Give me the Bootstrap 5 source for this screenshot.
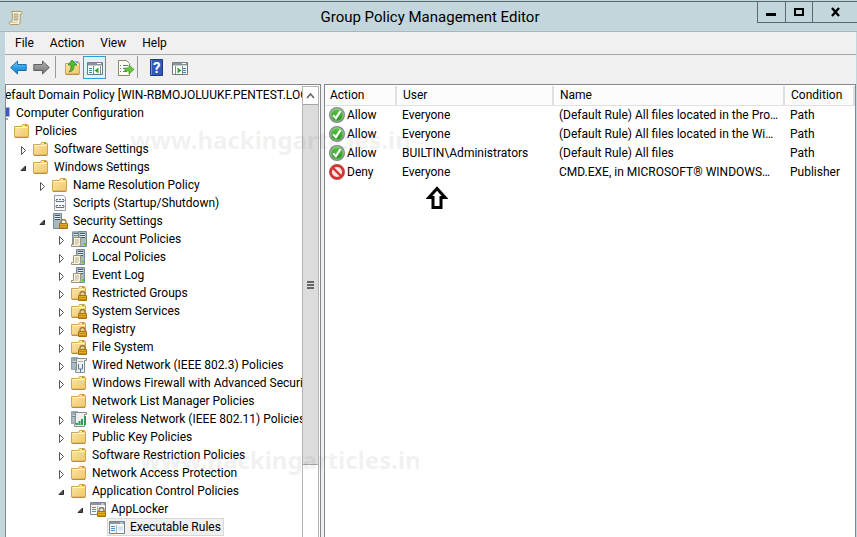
<!DOCTYPE html>
<html lang="en">
<head>
<meta charset="utf-8">
<meta name="viewport" content="width=device-width, initial-scale=1">
<title>Group Policy Management Editor</title>
<link rel="stylesheet" href="https://cdn.jsdelivr.net/npm/bootstrap@5.3.0/dist/css/bootstrap.min.css">
<style>
body{font-family:Roboto,"Open Sans",sans-serif;font-size:12px;line-height:18px;color:#000;background:#c3d6dc}
svg{display:block;flex:none}
button{color:#000}
.gp-window{border-top:1px solid #5b676b;margin-top:1px;height:calc(100vh - 1px)}
.gp-title{height:30px;border-bottom:1px solid #a9b6c0}
.gp-title h1{font-size:15px;line-height:30px;font-weight:400;padding-left:80px}
.gp-caption{height:21px;border:1px solid #5b6770;border-width:0 0 1px 1px;background:none;padding:0}
.gp-caption-s{width:28px}
.gp-caption-m{width:27px}
.gp-caption-l{width:45px}
.gp-main{background:#f0f0f0;margin:0 1px 0 5px}
.gp-menu{height:23px;border-bottom:1px solid #a8a8a8;padding-left:10px;gap:16px}
.gp-menu button{border:0;background:none;padding:0;line-height:20px}
.gp-tools{height:29px;padding:1px 4px 4px}
.gp-tool{width:23px;height:23px;padding:0;border:1px solid transparent;background:none}
.gp-tool.on{border-color:#26a0da;background:#e3f2fa}
.gp-rule{width:1px;height:22px;background:#999}
.gp-panes{gap:3px}
.gp-pane{background:#fff;border:1px solid #828790;border-bottom:0}
.gp-left{width:316px}
.gp-view{padding-top:1px;white-space:nowrap}
.gp-tree{margin-left:-43px}
.gp-tree ul{padding-left:19px}
.gp-node{height:18px}
.gp-twist{width:13px;height:18px;padding:3px 0 0;border:0;background:none;flex:none}
.gp-item{gap:5px;height:18px}
.gp-item.chosen{background:#f0f0f0;outline:1px solid #d9d9d9;outline-offset:-1px;margin-left:-2px;padding:0 3px 0 2px}
.gp-scroll{width:17px;margin:1px 1px 0 0;border:1px solid #b4b4b4;border-bottom:0}
.gp-scroll button{height:17px;padding:0;border:0;background:#fff}
.gp-thumb{height:361px;background:#dcdcdc;border:1px solid #a5a5a5;border-width:1px 0}
.gp-list{table-layout:fixed;width:100%;margin:1px 0 0}
.gp-list th{height:19px;padding:1px 5px 0;line-height:17px;font-weight:400;background:#fcfcfc;border-right:2px solid #e0e0e0;border-bottom:1px solid #e0e0e0}
.gp-list td{height:19px;padding:0 5px;white-space:nowrap;overflow:hidden;text-overflow:ellipsis}
.gp-list td:first-child{padding-left:4px}
.gp-list td svg{margin-right:2px}
.gp-list th+th,.gp-list td+td{padding-left:6px}
.gp-col-action{width:71px}.gp-col-user{width:157px}.gp-col-cond{width:70px}
.gp-pointer{margin:5px 0 0 101px}
.gp-stamp{font:bold 24px/30px "Noto Sans","Open Sans",sans-serif;color:rgba(110,110,110,.11);pointer-events:none;white-space:nowrap}
.gp-stamp-a{left:130px;top:125px}
.gp-stamp-b{left:140px;top:445px}
</style>
<script src="https://cdn.jsdelivr.net/npm/bootstrap@5.3.0/dist/js/bootstrap.bundle.min.js"></script>
</head>
<body class="overflow-hidden">
<svg width="0" height="0" class="position-absolute" aria-hidden="true">
<defs>
<linearGradient id="gold" x2="1" y2="1"><stop stop-color="#fbe6a6"/><stop offset="1" stop-color="#efc76b"/></linearGradient>
<linearGradient id="azure" x2="0" y2="1"><stop stop-color="#7fd0f8"/><stop offset=".5" stop-color="#2ba0e8"/><stop offset="1" stop-color="#1779c4"/></linearGradient>
<linearGradient id="steel" x2="0" y2="1"><stop stop-color="#b5b5b5"/><stop offset="1" stop-color="#6f6f6f"/></linearGradient>
<linearGradient id="leaf" x2="0" y2="1"><stop stop-color="#67c94f"/><stop offset="1" stop-color="#189012"/></linearGradient>
<symbol id="folder" viewBox="0 0 16 16"><path d="M.5 3.500h7l1-2h5l1 1.500v11h-14z" fill="url(#gold)" stroke="#d0a653"/><path d="M1 14.500h13" stroke="#b88f42"/><path d="M9 2.500h3M1.500 4.500h12" stroke="#fff5cf"/><path d="M11 2.500h2" stroke="#4a9be0"/></symbol>
<symbol id="lock" viewBox="0 0 9 10"><path d="M2 5V3a2.500 2.500 0 0 1 5 0v2" fill="none" stroke="#8d7745" stroke-width="1.300"/><path d="M.5 4.500h8v5h-8z" fill="#e2ad2c" stroke="#a87412"/><path d="M1 6.500h7M1 8.500h7" stroke="#c38a16"/></symbol>
<symbol id="folderlock" viewBox="0 0 16 16"><use href="#folder" width="16" height="16"/><use href="#lock" x="7" y="6" width="9" height="10"/></symbol>
<symbol id="tower" viewBox="0 0 9 16"><path d="M.5.5h8v15h-8z" fill="#a9b9c2" stroke="#778994"/><path d="M2 2.500h5M2 4.500h5M2 6.500h5" stroke="#3d5968"/><path d="M2 3.500h5M2 5.500h5" stroke="#e9f0f2"/><path d="M6 13h2" stroke="#52d622" stroke-width="2"/></symbol>
<symbol id="paper" viewBox="0 0 10 10"><path d="M2.500.5h7v7l-1 2h-8v-2h2z" fill="#f8f3dc" stroke="#9b937a"/><path d="M4 3h4M4 5h4M4 7h3" stroke="#bcb294"/></symbol>
<symbol id="server" viewBox="0 0 16 16"><use href="#tower" x="5" width="9" height="16"/><use href="#paper" y="6" width="10" height="10"/></symbol>
<symbol id="servers" viewBox="0 0 16 16"><use href="#tower" x="1" width="8" height="15"/><use href="#tower" x="7" width="9" height="16"/><use href="#paper" y="6" width="10" height="10"/></symbol>
<symbol id="serverlock" viewBox="0 0 16 16"><use href="#tower" x="1" width="9" height="16"/><use href="#lock" x="7" y="6" width="9" height="10"/></symbol>
<symbol id="scripts" viewBox="0 0 16 16"><path d="M2.500.5h9l2 2v13h-11z" fill="#f7f8fa" stroke="#9a9ea8"/><path d="M4 4.500h2M7 4.500h2M10 4.500h2M4 6.500h8M4 10.500h2M7 10.500h2M10 10.500h2M4 12.500h8" stroke="#666e82"/><path d="M3.500 5.500h1M11.500 5.500h1M3.500 11.500h1M11.500 11.500h1" stroke="#666e82"/></symbol>
<symbol id="wired" viewBox="0 0 16 16"><use href="#tower" width="7" height="13"/><path d="M5.500 1.500h10v2h-2v12h-9v-2h1z" fill="#eef0ee" stroke="#858d90"/><path d="M7.500 7v5h4V7M9.500 12v3" fill="none" stroke="#52799d"/><path d="M7 4.500h5" stroke="#afb7bb"/></symbol>
<symbol id="wireless" viewBox="0 0 16 16"><use href="#tower" width="7" height="13"/><path d="M4.500 1.500h11v2h-2v12h-10v-2h1z" fill="#eef0ee" stroke="#858d90"/><path d="M6 12v2M8.500 10v4M11 8v6M14 5v9" stroke="#2e9a57" stroke-width="2"/></symbol>
<symbol id="rules" viewBox="0 0 16 16"><path d="M.5 2.500h15v12H.5z" fill="#f5f7f8" stroke="#7a858c"/><path d="M1 4h14" stroke="#8b979e" stroke-width="2"/><path d="M11 4h3" stroke="#e6eef2"/><path d="M2 7.500h4M2 9.500h4M2 11.500h4" stroke="#4592cd"/><path d="M7.500 6v8" stroke="#aeb6ba"/><path d="M9 7.500h5v4H9z" fill="#d4e3ee"/></symbol>
<symbol id="ruleslock" viewBox="0 0 16 16"><use href="#rules" y="-1" width="16" height="16"/><use href="#lock" x="7" y="6" width="9" height="10"/></symbol>
<symbol id="computer" viewBox="0 0 16 16"><path d="M2 2.500h12.500v9H2z" fill="#3558d0" stroke="#b2b6bd"/><path d="M5 14h8" stroke="#aaa" stroke-width="2"/></symbol>
<symbol id="scroll" viewBox="0 0 16 16"><path d="M4 1.500h10c1.500 0 1.500 3 0 3h-1v8c0 2-1 3-2 3H3c-2 0-2-3-1-3h2c1-4 1-8 0-11z" fill="#f8f1d7" stroke="#a89463"/><path d="M6 4.500h5M6 6.500h5M6 8.500h5M6 10.500h5" stroke="#8e8873"/><path d="M2 13h8" stroke="#d6c38f"/></symbol>
<symbol id="closed" viewBox="0 0 9 11"><path d="M1.500 1.500v8l4-4z" fill="#fff" stroke="#555"/></symbol>
<symbol id="open" viewBox="0 0 9 11"><path d="M5.500 3v4.500H1z" fill="#4e4e4e" stroke="#2b2b2b"/></symbol>
<symbol id="arrow" viewBox="0 0 17 15"><path d="M.7 7.500 7.500 1v3.500h8.700v6H7.500V14z"/></symbol>
<symbol id="ok" viewBox="0 0 16 16"><circle cx="8" cy="8" r="7.300" fill="url(#leaf)" stroke="#858b8b" stroke-width="1.400"/><circle cx="8" cy="8" r="6.200" fill="none" stroke="#c4d9c3" stroke-width=".7"/><path d="m4.200 8.200 2.700 3L11.500 4" fill="none" stroke="#fff" stroke-width="2.200"/></symbol>
<symbol id="no" viewBox="0 0 16 16"><circle cx="8" cy="8" r="6.400" fill="#f4e6e5" stroke="#d8342f" stroke-width="2.600"/><path d="m3.500 3.500 9 9" stroke="#d8342f" stroke-width="2.400"/><circle cx="8" cy="8" r="7.600" fill="none" stroke="#a14b48" stroke-width=".6"/></symbol>
</defs>
</svg>
<div class="gp-window d-flex flex-column">
<header class="gp-title d-flex align-items-start position-relative flex-shrink-0">
<svg class="mt-2 ms-2" width="15" height="15"><use href="#scroll"/></svg>
<h1 class="flex-grow-1 text-center mb-0">Group Policy Management Editor</h1>
<div class="d-flex">
<button class="gp-caption gp-caption-s" aria-label="Minimize"><svg width="26" height="20"><path d="M8 11h10v3H8z"/></svg></button>
<button class="gp-caption gp-caption-m" aria-label="Maximize"><svg width="26" height="20"><path d="M9 7h8v6H9z" fill="none" stroke="#000" stroke-width="2"/></svg></button>
<button class="gp-caption gp-caption-l" aria-label="Close"><svg width="44" height="20"><path d="m19 6 7 8m0-8-7 8" stroke="#000" stroke-width="2.400"/></svg></button>
</div>
</header>
<main class="gp-main d-flex flex-column flex-grow-1 overflow-hidden">
<nav class="gp-menu d-flex align-items-center flex-shrink-0" aria-label="Menu">
<button>File</button><button>Action</button><button>View</button><button>Help</button>
</nav>
<div class="gp-tools d-flex align-items-start flex-shrink-0" role="toolbar">
<button class="gp-tool" aria-label="Back"><svg width="17" height="21"><use href="#arrow" y="3" width="17" height="15" fill="url(#azure)" stroke="#1f6ca9"/></svg></button>
<button class="gp-tool" aria-label="Forward"><svg width="21" height="21"><g transform="matrix(-1 0 0 1 17 3)"><use href="#arrow" width="17" height="15" fill="url(#steel)" stroke="#606060"/></g></svg></button>
<i class="gp-rule me-1"></i>
<button class="gp-tool" aria-label="Up one level"><svg width="21" height="21"><use href="#folder" x="4" y="3" width="16" height="16"/><path d="M8 15c5-1 5-4 5-7h3l-5-5-4 5h3c0 3 0 5-2 7z" fill="#52bd2d" stroke="#27831a" stroke-width=".7"/></svg></button>
<button class="gp-tool on" aria-label="Show console tree"><svg width="21" height="21"><path d="M3.500 5.500h15v12h-15z" fill="#fff" stroke="#70777c"/><path d="M4 7h14" stroke="#8b9499" stroke-width="3"/><path d="M13 6.500h4" stroke="#fff"/><path d="M5 11.500h3M5 13.500h3M5 15.500h3" stroke="#3b86bd"/><path d="M9.500 9v8M16.500 9v8" stroke="#858c91"/><path d="m14.500 10.500-4 3 4 3z" fill="#31a52d"/></svg></button>
<button class="gp-tool ms-2" aria-label="Export list"><svg width="21" height="21"><path d="M3.500 3.500h8l3 3v12h-11z" fill="#fffdf2" stroke="#91866b"/><path d="M5 8.500h1M8 8.500h5M5 11.500h1M8 11.500h5M5 14.500h1M8 14.500h4" stroke="#687884"/><path d="M10 11h4V8l5 4.500-5 4.500v-3h-4z" fill="#69c53c" stroke="#379820" stroke-width=".7"/></svg></button>
<i class="gp-rule me-2"></i>
<button class="gp-tool" aria-label="Help"><svg width="21" height="21"><path d="M3.500 2.500h12v16h-12z" fill="#3258b9" stroke="#1d3885"/><path d="M4.500 3v15" stroke="#7393dc"/><text x="6" y="16" font-size="15" font-weight="700" fill="#fff">?</text></svg></button>
<button class="gp-tool" aria-label="Show action pane"><svg width="21" height="21"><path d="M2.500 5.500h15v12h-15z" fill="#fff" stroke="#70777c"/><path d="M3 7h14" stroke="#8b9499" stroke-width="3"/><path d="M12 6.500h4" stroke="#fff"/><path d="M13 11.500h3M13 13.500h3M13 15.500h3" stroke="#3b86bd"/><path d="M5.500 9v8M12.500 9v8" stroke="#858c91"/><path d="m7.500 10.500 4 3-4 3z" fill="#31a52d"/></svg></button>
</div>
<div class="gp-panes d-flex flex-grow-1 overflow-hidden">
<section class="gp-pane gp-left d-flex flex-shrink-0 overflow-hidden" aria-label="Console tree">
<div class="gp-view flex-grow-1 overflow-hidden">
<ul class="gp-tree list-unstyled mb-0">
<li><div class="gp-node d-flex"><span class="gp-twist"></span><span class="gp-item d-flex align-items-center"><svg width="16" height="16"><use href="#scroll"/></svg>Default Domain Policy [WIN-RBMOJOLUUKF.PENTEST.LOCAL]</span></div>
<ul class="list-unstyled">
<li><div class="gp-node d-flex"><span class="gp-twist"></span><span class="gp-item d-flex align-items-center"><svg width="16" height="16"><use href="#computer"/></svg>Computer Configuration</span></div>
<ul class="list-unstyled">
<li><div class="gp-node d-flex"><span class="gp-twist"></span><span class="gp-item d-flex align-items-center"><svg width="16" height="16"><use href="#folder"/></svg>Policies</span></div>
<ul class="list-unstyled">
<li><div class="gp-node d-flex"><button class="gp-twist" aria-label="Expand"><svg width="9" height="11"><use href="#closed"/></svg></button><span class="gp-item d-flex align-items-center"><svg width="16" height="16"><use href="#folder"/></svg>Software Settings</span></div></li>
<li><div class="gp-node d-flex"><button class="gp-twist" aria-label="Collapse"><svg width="9" height="11"><use href="#open"/></svg></button><span class="gp-item d-flex align-items-center"><svg width="16" height="16"><use href="#folder"/></svg>Windows Settings</span></div>
<ul class="list-unstyled">
<li><div class="gp-node d-flex"><button class="gp-twist" aria-label="Expand"><svg width="9" height="11"><use href="#closed"/></svg></button><span class="gp-item d-flex align-items-center"><svg width="16" height="16"><use href="#folder"/></svg>Name Resolution Policy</span></div></li>
<li><div class="gp-node d-flex"><span class="gp-twist"></span><span class="gp-item d-flex align-items-center"><svg width="16" height="16"><use href="#scripts"/></svg>Scripts (Startup/Shutdown)</span></div></li>
<li><div class="gp-node d-flex"><button class="gp-twist" aria-label="Collapse"><svg width="9" height="11"><use href="#open"/></svg></button><span class="gp-item d-flex align-items-center"><svg width="16" height="16"><use href="#serverlock"/></svg>Security Settings</span></div>
<ul class="list-unstyled">
<li><div class="gp-node d-flex"><button class="gp-twist" aria-label="Expand"><svg width="9" height="11"><use href="#closed"/></svg></button><span class="gp-item d-flex align-items-center"><svg width="16" height="16"><use href="#servers"/></svg>Account Policies</span></div></li>
<li><div class="gp-node d-flex"><button class="gp-twist" aria-label="Expand"><svg width="9" height="11"><use href="#closed"/></svg></button><span class="gp-item d-flex align-items-center"><svg width="16" height="16"><use href="#server"/></svg>Local Policies</span></div></li>
<li><div class="gp-node d-flex"><button class="gp-twist" aria-label="Expand"><svg width="9" height="11"><use href="#closed"/></svg></button><span class="gp-item d-flex align-items-center"><svg width="16" height="16"><use href="#server"/></svg>Event Log</span></div></li>
<li><div class="gp-node d-flex"><button class="gp-twist" aria-label="Expand"><svg width="9" height="11"><use href="#closed"/></svg></button><span class="gp-item d-flex align-items-center"><svg width="16" height="16"><use href="#folderlock"/></svg>Restricted Groups</span></div></li>
<li><div class="gp-node d-flex"><button class="gp-twist" aria-label="Expand"><svg width="9" height="11"><use href="#closed"/></svg></button><span class="gp-item d-flex align-items-center"><svg width="16" height="16"><use href="#folderlock"/></svg>System Services</span></div></li>
<li><div class="gp-node d-flex"><button class="gp-twist" aria-label="Expand"><svg width="9" height="11"><use href="#closed"/></svg></button><span class="gp-item d-flex align-items-center"><svg width="16" height="16"><use href="#folderlock"/></svg>Registry</span></div></li>
<li><div class="gp-node d-flex"><button class="gp-twist" aria-label="Expand"><svg width="9" height="11"><use href="#closed"/></svg></button><span class="gp-item d-flex align-items-center"><svg width="16" height="16"><use href="#folderlock"/></svg>File System</span></div></li>
<li><div class="gp-node d-flex"><button class="gp-twist" aria-label="Expand"><svg width="9" height="11"><use href="#closed"/></svg></button><span class="gp-item d-flex align-items-center"><svg width="16" height="16"><use href="#wired"/></svg>Wired Network (IEEE 802.3) Policies</span></div></li>
<li><div class="gp-node d-flex"><button class="gp-twist" aria-label="Expand"><svg width="9" height="11"><use href="#closed"/></svg></button><span class="gp-item d-flex align-items-center"><svg width="16" height="16"><use href="#folder"/></svg>Windows Firewall with Advanced Security</span></div></li>
<li><div class="gp-node d-flex"><span class="gp-twist"></span><span class="gp-item d-flex align-items-center"><svg width="16" height="16"><use href="#folder"/></svg>Network List Manager Policies</span></div></li>
<li><div class="gp-node d-flex"><button class="gp-twist" aria-label="Expand"><svg width="9" height="11"><use href="#closed"/></svg></button><span class="gp-item d-flex align-items-center"><svg width="16" height="16"><use href="#wireless"/></svg>Wireless Network (IEEE 802.11) Policies</span></div></li>
<li><div class="gp-node d-flex"><button class="gp-twist" aria-label="Expand"><svg width="9" height="11"><use href="#closed"/></svg></button><span class="gp-item d-flex align-items-center"><svg width="16" height="16"><use href="#folder"/></svg>Public Key Policies</span></div></li>
<li><div class="gp-node d-flex"><button class="gp-twist" aria-label="Expand"><svg width="9" height="11"><use href="#closed"/></svg></button><span class="gp-item d-flex align-items-center"><svg width="16" height="16"><use href="#folder"/></svg>Software Restriction Policies</span></div></li>
<li><div class="gp-node d-flex"><button class="gp-twist" aria-label="Expand"><svg width="9" height="11"><use href="#closed"/></svg></button><span class="gp-item d-flex align-items-center"><svg width="16" height="16"><use href="#folder"/></svg>Network Access Protection</span></div></li>
<li><div class="gp-node d-flex"><button class="gp-twist" aria-label="Collapse"><svg width="9" height="11"><use href="#open"/></svg></button><span class="gp-item d-flex align-items-center"><svg width="16" height="16"><use href="#folder"/></svg>Application Control Policies</span></div>
<ul class="list-unstyled">
<li><div class="gp-node d-flex"><button class="gp-twist" aria-label="Collapse"><svg width="9" height="11"><use href="#open"/></svg></button><span class="gp-item d-flex align-items-center"><svg width="16" height="16"><use href="#ruleslock"/></svg>AppLocker</span></div>
<ul class="list-unstyled">
<li><div class="gp-node d-flex"><span class="gp-twist"></span><span class="gp-item chosen d-flex align-items-center"><svg width="16" height="16"><use href="#rules"/></svg>Executable Rules</span></div></li>
</ul></li>
</ul></li>
</ul></li>
</ul></li>
</ul></li>
</ul></li>
</ul></li>
</ul>
</div>
<div class="gp-scroll d-flex flex-column flex-shrink-0">
<button class="flex-shrink-0" aria-label="Scroll up"><svg width="15" height="16"><path d="m4 10 3.500-4L11 10" fill="none" stroke="#606060" stroke-width="1.500"/></svg></button>
<div class="gp-thumb d-flex align-items-center justify-content-center flex-shrink-0"><svg width="7" height="8"><path d="M0 1h7M0 4h7M0 7h7" stroke="#666" stroke-width="2"/></svg></div>
</div>
</section>
<section class="gp-pane flex-grow-1 overflow-hidden" aria-label="Rules">
<table class="gp-list">
<colgroup><col class="gp-col-action"><col class="gp-col-user"><col><col class="gp-col-cond"></colgroup>
<thead><tr><th>Action</th><th>User</th><th>Name</th><th>Condition</th></tr></thead>
<tbody>
<tr><td><span class="d-flex align-items-center"><svg width="16" height="16"><use href="#ok"/></svg>Allow</span></td><td>Everyone</td><td>(Default Rule) All files located in the Program Files folder</td><td>Path</td></tr>
<tr><td><span class="d-flex align-items-center"><svg width="16" height="16"><use href="#ok"/></svg>Allow</span></td><td>Everyone</td><td>(Default Rule) All files located in the Windows folder</td><td>Path</td></tr>
<tr><td><span class="d-flex align-items-center"><svg width="16" height="16"><use href="#ok"/></svg>Allow</span></td><td>BUILTIN\Administrators</td><td>(Default Rule) All files</td><td>Path</td></tr>
<tr><td><span class="d-flex align-items-center"><svg width="16" height="16"><use href="#no"/></svg>Deny</span></td><td>Everyone</td><td>CMD.EXE, in MICROSOFT® WINDOWS® OPERATING SYSTEM</td><td>Publisher</td></tr>
</tbody>
</table>
<svg class="gp-pointer" width="22" height="24"><path d="M11 2.500 3 11.500h4v10h8v-10h4z" fill="#fff" stroke="#000" stroke-width="3"/></svg>
</section>
</div>
</main>
</div>
<div class="gp-stamp gp-stamp-a position-absolute">www.hackingarticles.in</div>
<div class="gp-stamp gp-stamp-b position-absolute">www.hackingarticles.in</div>
</body>
</html>
